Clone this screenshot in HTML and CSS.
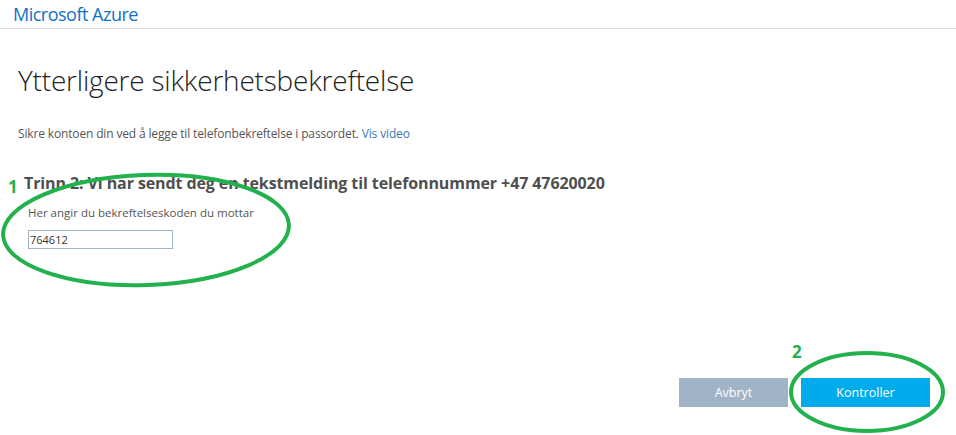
FILE: index.html
```html
<!DOCTYPE html>
<html lang="no">
<head>
 <meta charset="UTF-8">
 <meta name="viewport" content="width=device-width, initial-scale=1.0">
 <title>Ytterligere sikkerhetsbekreftelse</title>
 <link rel="stylesheet" href="styles.css">
</head>
<body>
 <div class="header">
 <span class="brand">Microsoft Azure</span>
 </div>

 <div class="main">
 <h1>Ytterligere sikkerhetsbekreftelse</h1>
 <p class="intro">Sikre kontoen din ved å legge til telefonbekreftelse i passordet. <a href="#">Vis video</a></p>

 <div class="step">
 <h2>Trinn 2: Vi har sendt deg en tekstmelding til telefonnummer +47 47620020</h2>
 <div class="field">
 <label for="codeInput">Her angir du bekreftelseskoden du mottar</label>
 <input type="text" id="codeInput" value="764612" autocomplete="off">
 </div>
 </div>
 </div>

 <div class="actions">
 <button class="btn cancel">Avbryt</button>
 <button class="btn primary">Kontroller</button>
 </div>

 <!-- hand drawn markers on top of the screenshot -->
 <svg class="marks" width="956" height="435" viewBox="0 0 956 435">
 <ellipse cx="146" cy="230" rx="143" ry="55" transform="rotate(-2 146 230)" />
 <ellipse cx="867" cy="392" rx="76" ry="39" />
 <text x="8" y="193">1</text>
 <text x="792" y="358">2</text>
 </svg>
</body>
</html>
```
FILE: styles.css
```css
body {
margin: 0;
font-family: "Open Sans", "Noto Sans", sans-serif;
background: white;
color: #333;
width: 956px;
height: 435px;
position: relative;
overflow: hidden;
}
.header {
height: 29px;
border-bottom: 1px solid #dedede;
padding-left: 13px;
box-sizing: border-box;
}
.brand {
display: inline-block;
font-size: 18px;
line-height: 28px;
color: #0f72c5;
letter-spacing: -0.5px;
}
.main {
padding-left: 18px;
}
h1 {
margin: 33px 0 0;
font-size: 28px;
font-weight: 300;
line-height: 36px;
color: #222;
letter-spacing: -0.2px;
}
.intro {
margin: 28px 0 0;
font-size: 12px;
line-height: 16px;
color: #555;
letter-spacing: -0.15px;
}
.intro a {
color: #3c78b5;
text-decoration: none;
}
.step {
padding-left: 6px;
margin-top: 30px;
}
h2 {
margin: 0;
font-size: 16px;
font-weight: 700;
line-height: 22px;
color: #4f4f4f;
letter-spacing: -0.1px;
}
.field {
padding-left: 4px;
margin-top: 11px;
}
label {
display: block;
font-size: 11.5px;
line-height: 16px;
color: #545454;
}
input {
display: block;
margin-top: 9px;
width: 145px;
height: 19px;
box-sizing: border-box;
border: 1px solid #a5b4c4;
padding: 0 1px;
font-family: "Open Sans", sans-serif;
font-size: 11px;
color: #333;
outline: none;
}
.actions {
position: absolute;
right: 26px;
top: 378px;
display: flex;
gap: 13px;
}
.btn {
height: 29px;
border: none;
color: white;
font-family: "Open Sans", sans-serif;
font-size: 12.5px;
cursor: pointer;
}
.cancel {
width: 109px;
background: #a1b4c7;
}
.primary {
width: 129px;
background: #00abec;
}
.marks {
position: absolute;
left: 0;
top: 0;
pointer-events: none;
}
.marks ellipse {
fill: none;
stroke: #22b14c;
stroke-width: 4;
}
.marks text {
fill: #22b14c;
font-family: "Open Sans", sans-serif;
font-weight: 700;
font-size: 17px;
}
```
